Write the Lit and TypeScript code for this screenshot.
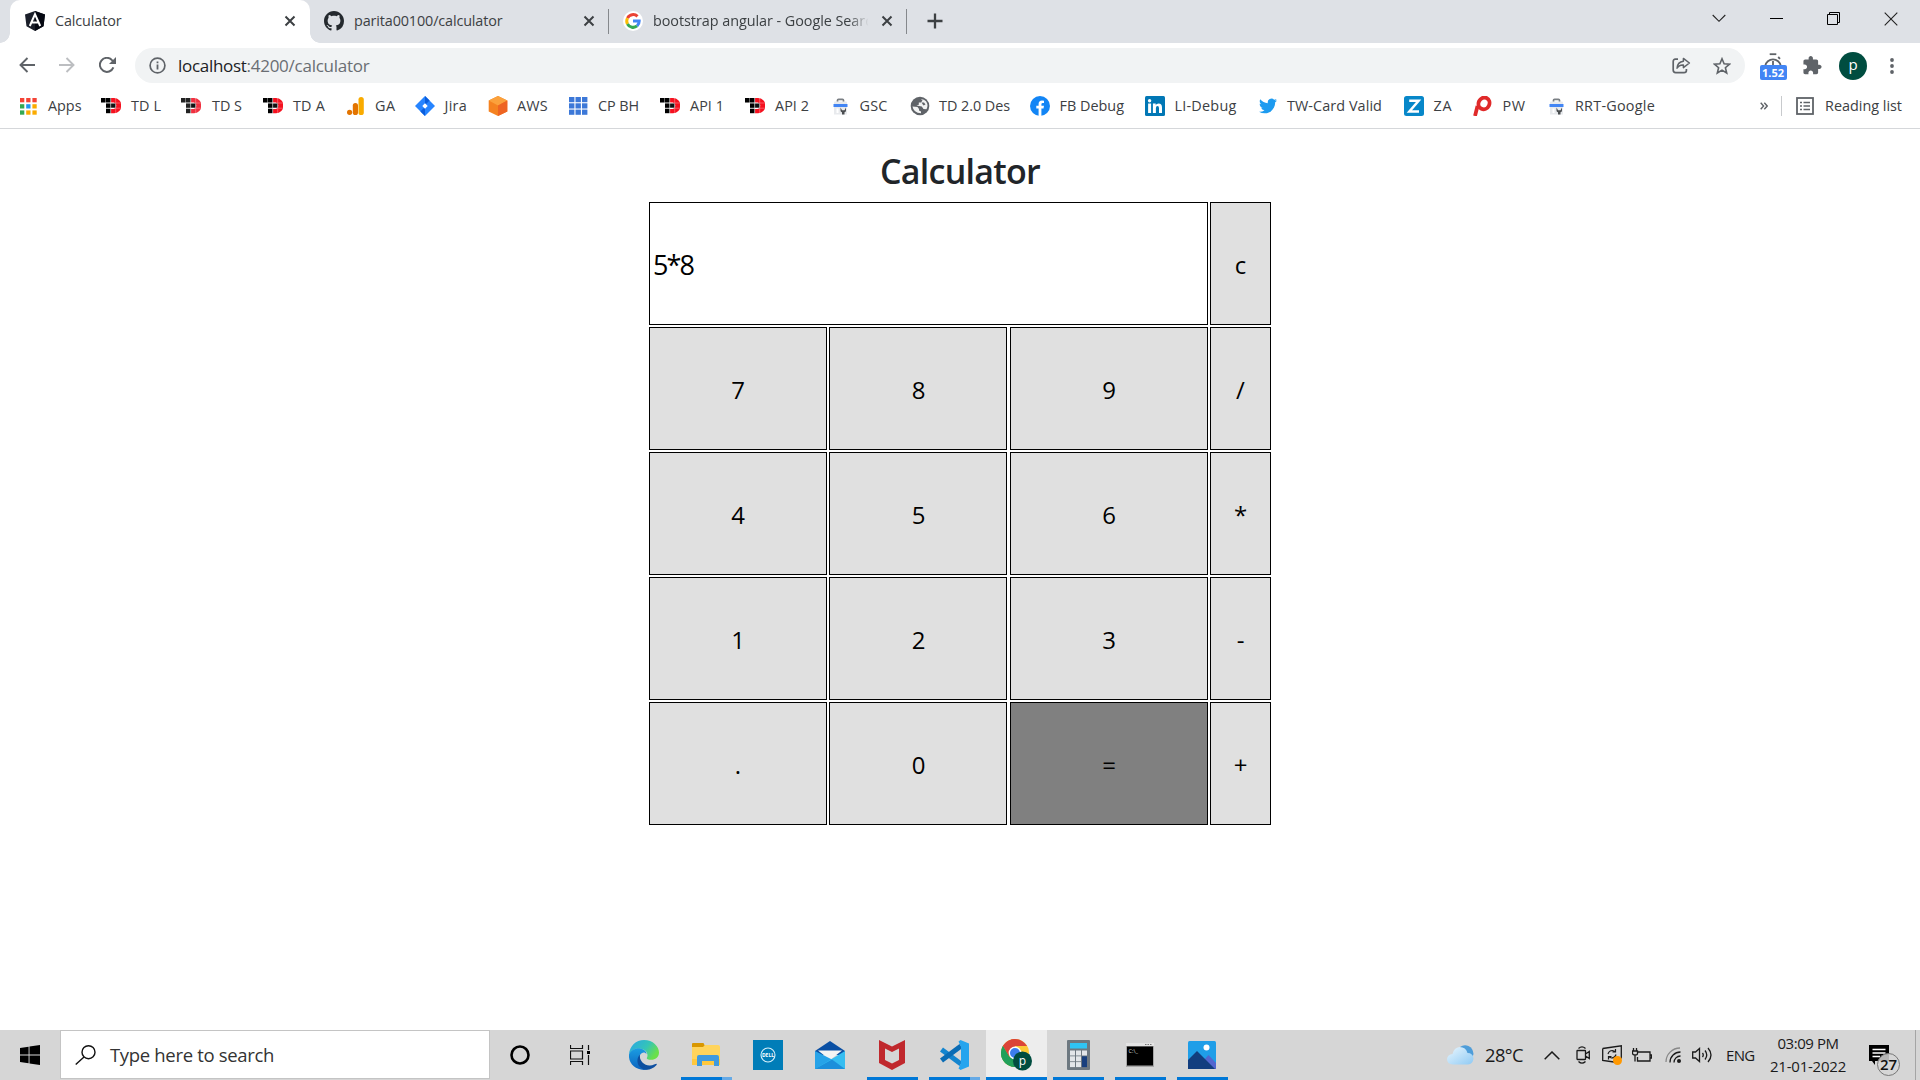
import { LitElement, html, svg, css, nothing } from "lit";
import { customElement, property } from "lit/decorators.js";
import { styleMap } from "lit/directives/style-map.js";

/* Text that spreads or tightens its tracking to occupy a given width. */
@customElement("fit-text")
class FitText extends LitElement {
  @property({ type: Number }) w = 0;
  @property() text = "";
  static styles = css`
    :host { display: block; white-space: pre; flex: none; }
    .run { display: inline-block; }
  `;
  updated() {
    const run = this.renderRoot.querySelector(".run") as HTMLElement;
    run.style.letterSpacing = "0px";
    const natural = run.getBoundingClientRect().width;
    if (this.w) run.style.letterSpacing = (this.w - natural) / this.text.length + "px";
  }
  render() {
    return html`<span class="run">${this.text}</span>`;
  }
}

const fit = (text: string, w: number) => html`<fit-text .text=${text} .w=${w}></fit-text>`;
const icon = (w: number, h: number, body: unknown, box = `0 0 ${w} ${h}`) =>
  html`<svg class="icon" width=${w} height=${h} viewBox=${box}>${body}</svg>`;

const closeX = icon(12, 12, svg`<path d="M1.5 1.5l9 9M10.5 1.5l-9 9" stroke="#3c4043" stroke-width="2" fill="none"/>`);

const angular = icon(20, 20, svg`<path d="M10 0L20 3.4L18.5 15.2L10 20L1.5 15.2L0 3.4z" fill="#1b1f2a"/><path d="M10 0L20 3.4L18.5 15.2L10 20z" fill="#050812"/><path d="M4.8 15L10 3.2L15.2 15M6.9 11.6H13.1" fill="none" stroke="#fff" stroke-width="2"/>`);
const github = icon(20, 20, svg`<path fill="#24292e" fill-rule="evenodd" d="M8 0C3.58 0 0 3.58 0 8c0 3.54 2.29 6.53 5.47 7.59.4.07.55-.17.55-.38 0-.19-.01-.82-.01-1.49-2.01.37-2.53-.49-2.69-.94-.09-.23-.48-.94-.82-1.13-.28-.15-.68-.52-.01-.53.63-.01 1.08.58 1.23.82.72 1.21 1.87.87 2.33.66.07-.52.28-.87.51-1.07-1.78-.2-3.64-.89-3.64-3.95 0-.87.31-1.59.82-2.15-.08-.2-.36-1.02.08-2.12 0 0 .67-.21 2.2.82.64-.18 1.32-.27 2-.27s1.36.09 2 .27c1.53-1.04 2.2-.82 2.2-.82.44 1.1.16 1.92.08 2.12.51.56.82 1.27.82 2.15 0 3.07-1.87 3.75-3.65 3.95.29.25.54.73.54 1.48 0 1.07-.01 1.93-.01 2.2 0 .21.15.46.55.38A8.01 8.01 0 0016 8c0-4.42-3.58-8-8-8z"/>`, "0 0 16 16");
const google = icon(20, 20, svg`<circle cx="10" cy="10" r="10" fill="#fff"/><g fill="none" stroke-width="3"><path d="M14.5 5.4A6.3 6.3 0 0 0 4.5 7.1" stroke="#ea4335"/><path d="M4.5 7.1A6.3 6.3 0 0 0 4.5 13" stroke="#fbbc05"/><path d="M4.5 13A6.3 6.3 0 0 0 14.1 14.9" stroke="#34a853"/><path d="M10 10.1H16.2A6.3 6.3 0 0 1 14.1 14.9" stroke="#4285f4"/></g>`);

const td = (dim = false) => icon(20, 16, svg`
  <g fill=${dim ? "#222" : "#000"}><rect x="0" y="0" width="4.6" height="4.6"/><rect x="5" y="0" width="4.6" height="4.6"/><rect x="5" y="5.3" width="4.6" height="4.6"/><rect x="5" y="10.6" width="4.6" height="4.6"/></g>
  <path d="M10 0H13A7.5 7.6 0 0 1 13 15.2H10V11H12.7A3.4 3.4 0 0 0 12.7 4.4H10z" fill=${dim ? "#f0303f" : "#f5111f"}/>
  <rect x="10" y="5.4" width="4.6" height="4.4" fill="#111"/>
  <path d="M9.8 0V15.2M14.7 0V15.2M0 5H20M4.8 10.2H20" stroke="#fff" stroke-width=".5" opacity=".6"/>`);
const apps = icon(17, 17, svg`${["#f44336", "#f44336", "#f44336", "#34a853", "#2196f3", "#fbab00", "#34a853", "#fbab00", "#fbab00"].map(
  (c, i) => svg`<rect x=${(i % 3) * 6.2} y=${Math.floor(i / 3) * 6.2} width="4.3" height="4.3" fill=${c}/>`)}`);
const ga = icon(17, 18, svg`<rect x="11.5" y="0" width="5.3" height="18" rx="2.6" fill="#f9ab00"/><rect x="5.8" y="6" width="5.2" height="12" rx="2.6" fill="#e37400"/><circle cx="2.6" cy="15.3" r="2.6" fill="#e37400"/>`);
const jira = icon(20, 20, svg`<path d="M10 0L20 10L10 20L0 10z" fill="#2684ff"/><path d="M10 0L14.6 4.6L10 9zM10 20L5.4 15.4L10 11z" fill="#0a5ddc"/><path d="M10 7.3L12.7 10L10 12.7L7.3 10z" fill="#fff"/>`);
const aws = icon(20, 20, svg`<path d="M10 0L19.3 4.5V15.5L10 20L.7 15.500V4.5z" fill="#f58220"/><path d="M10 0L19.3 4.5L10 9.5L.7 4.5z" fill="#fba13c"/><path d="M19.3 4.5L10 9.5V20L19.3 15.5z" fill="#ee6422"/>`);
const cpbh = icon(19, 18, svg`${[...Array(9).keys()].map((i) => svg`<rect x=${(i % 3) * 6.5} y=${Math.floor(i / 3) * 6.3} width="5.4" height="5.2" fill="#3c78d8"/>`)}`);
const gsc = icon(17, 20, svg`<path d="M5.500 6V4.300Q5.500 3.300 6.500 3.300H10.500Q11.500 3.300 11.500 4.300V6" stroke="#7a7f84" stroke-width="1.700" fill="none"/><path d="M2 6.500Q2 5.500 3 5.500H14Q15 5.500 15 6.500V18.500H2z" fill="#e8eaed"/><path d="M1.500 8H15.500V11H1.500z" fill="#4285f4"/><path d="M4.500 12.500H6.500V17H4.500z" fill="#fff"/><path d="M8.500 11.500V14.500Q8.500 16 10 16.200V18.500H12.500V16.200Q14 16 14 14.500V11.500L12.500 14.300H10z" fill="#4a4d50"/>`);
const globe = icon(20, 20, svg`<circle cx="10" cy="10" r="9.300" fill="#5f6368"/><path d="M2.500 10.500L7.500 11L9 13V14.500L11 15.500V17.300Q3.500 17 2.500 10.500zM11 3.200L12.500 4.500L11 6.500H8.800V8.800L6.500 9.500L11.800 10.500L13.500 13L16.500 13.200Q18.800 9 16 5.300Q14 3 11 3.200z" fill="#fff" opacity=".92"/><path d="M11.500 6.500H14L15.500 8.500L13.500 9.500z" fill="#5f6368"/>`);
const fb = icon(20, 20, svg`<circle cx="10" cy="10" r="10" fill="#1285f5"/><path d="M8.6 20V12.6H6.3V9.8H8.6V8Q8.6 4.5 12 4.5L14 4.7V7.1H12.7Q11.4 7.1 11.4 8.4V9.8H14L13.5 12.6H11.4V20z" fill="#fff"/>`);
const linkedin = icon(20, 20, svg`<rect width="20" height="20" rx="1.5" fill="#0177b5"/><circle cx="4.6" cy="4.7" r="1.7" fill="#fff"/><path d="M3.1 7.6H6.1V17H3.1zM7.9 7.6H10.7V9Q11.6 7.4 13.6 7.4Q17 7.4 17 11.6V17H14V12.3Q14 10 12.5 10Q10.9 10 10.9 12.3V17H7.9z" fill="#fff"/>`);
const twitter = icon(18, 18, svg`<path fill="#1d9bf0" d="M23.953 4.57a10 10 0 01-2.825.775 4.958 4.958 0 002.163-2.723c-.951.555-2.005.959-3.127 1.184a4.92 4.92 0 00-8.384 4.482C7.69 8.095 4.067 6.13 1.64 3.162a4.822 4.822 0 00-.666 2.475c0 1.71.87 3.213 2.188 4.096a4.904 4.904 0 01-2.228-.616v.06a4.923 4.923 0 003.946 4.827 4.996 4.996 0 01-2.212.085 4.936 4.936 0 004.604 3.417 9.867 9.867 0 01-6.102 2.105c-.39 0-.779-.023-1.17-.067a13.995 13.995 0 007.557 2.209c9.053 0 13.998-7.496 13.998-13.985 0-.21 0-.42-.015-.63A9.935 9.935 0 0024 4.59z"/>`, "0 0 24 24");
const za = icon(20, 20, svg`<rect width="20" height="20" rx="2.5" fill="#0787c9"/><path d="M5.2 4.8H14.6L5.4 15.4H15" fill="none" stroke="#fff" stroke-width="2.5"/>`);
const pw = icon(19, 20, svg`<path d="M2 20L4.500 10" stroke="#e02a2a" stroke-width="3.800" fill="none"/><ellipse cx="11" cy="7.400" rx="5.400" ry="6" transform="rotate(25 11 7.400)" fill="none" stroke="#e02a2a" stroke-width="3.800"/>`);

type Mark = { label: string; w: number; slot: number; icon: unknown; iw: number };
const marks: Mark[] = [
  { label: "Apps", w: 33.5, slot: 81, icon: apps, iw: 28 },
  { label: "TD L", w: 30, slot: 80, icon: td(), iw: 30 },
  { label: "TD S", w: 30, slot: 82, icon: td(true), iw: 31 },
  { label: "TD A", w: 32, slot: 84, icon: td(), iw: 30 },
  { label: "GA", w: 20.5, slot: 68, icon: ga, iw: 28 },
  { label: "Jira", w: 22.5, slot: 73, icon: jira, iw: 29.5 },
  { label: "AWS", w: 31, slot: 81, icon: aws, iw: 29 },
  { label: "CP BH", w: 41, slot: 91, icon: cpbh, iw: 29 },
  { label: "API 1", w: 34, slot: 85, icon: td(), iw: 30 },
  { label: "API 2", w: 34, slot: 87, icon: td(), iw: 30 },
  { label: "GSC", w: 28, slot: 77.5, icon: gsc, iw: 27.5 },
  { label: "TD 2.0 Des", w: 71, slot: 120, icon: globe, iw: 29.5 },
  { label: "FB Debug", w: 64.5, slot: 115, icon: fb, iw: 30 },
  { label: "LI-Debug", w: 62, slot: 114, icon: linkedin, iw: 30 },
  { label: "TW-Card Valid", w: 95, slot: 145, icon: twitter, iw: 28.5 },
  { label: "ZA", w: 19, slot: 69.5, icon: za, iw: 30 },
  { label: "PW", w: 23, slot: 74.5, icon: pw, iw: 29.5 },
  { label: "RRT-Google", w: 80, slot: 110, icon: gsc, iw: 27.5 },
];

@customElement("browser-chrome")
class BrowserChrome extends LitElement {
  static styles = css`
    :host { display: block; font: 14.4px/20px "Open Sans", "Noto Sans", sans-serif; color: #3c4043; background: #fff; }
    .icon { display: block; flex: none; }
    .strip { display: flex; height: 43px; background: #dee1e6; align-items: flex-start; }
    .tab { display: flex; align-items: center; box-sizing: border-box; height: 43px; flex: none; padding-bottom: 2px; }
    .tab.active { margin: 0 0 0 10px; width: 300px; padding-left: 15px; padding-right: 14px; background: #fff; border-radius: 10px 10px 0 0; position: relative; }
    .tab.active::before, .tab.active::after { content: ""; position: absolute; bottom: 0; width: 10px; height: 10px; }
    .tab.active::before { left: -10px; background: radial-gradient(circle at 0 0, transparent 9.5px, #fff 10px); }
    .tab.active::after { right: -10px; background: radial-gradient(circle at 100% 0, transparent 9.5px, #fff 10px); }
    .tab .name { flex: 1; margin-left: 10px; }
    .tab.github { width: 298px; padding-left: 14px; padding-right: 13px; }
    .tab.search { width: 297px; padding-left: 14px; padding-right: 13px; }
    .tab.search .name { margin-right: 8px; mask-image: linear-gradient(90deg, #000 89%, transparent 98%); }
    .rule { width: 1px; height: 25px; margin-top: 9px; background: #85888c; flex: none; }
    .plus { margin: 13px 0 0 20px; }
    .controls { margin-left: auto; display: flex; padding-right: 1px; }
    .controls .cell { width: 57px; height: 37px; display: grid; place-items: center; }
    .controls .cell:first-child { width: 59px; }
    .bar { display: flex; align-items: center; height: 45px; box-sizing: border-box; padding: 0 26px 0 19px; }
    .nav { display: flex; gap: 24px; width: 116px; flex: none; margin-top: -1px; }
    .omni { display: flex; align-items: center; flex: 1; height: 35px; border-radius: 18px; background: #f1f3f4; padding: 0 14px; box-sizing: border-box; font-size: 17px; color: #6a6e73; }
    .omni .info { margin-right: 12px; }
    .omni .host { color: #202124; }
    .omni .acts { margin-left: auto; display: flex; gap: 22px; align-items: center; }
    .ext { display: flex; align-items: center; margin-left: 14px; }
    .timer { width: 28px; height: 27px; display: flex; flex-direction: column; align-items: center; margin-right: 16px; padding-top: 1px; }
    .badge { width: 27px; height: 15px; border-radius: 2px; background: #4285f4; color: #fff; font-weight: 700; font-size: 11px; line-height: 16px; display: flex; justify-content: center; margin-top: -1px; z-index: 1; flex: none; }
    .who { width: 28px; height: 28px; border-radius: 50%; background: #004d40; color: #fff; font-size: 15px; line-height: 24px; text-align: center; margin: 0 23px 0 17px; }
    .marks { display: flex; align-items: center; height: 41px; box-sizing: border-box; border-bottom: 1px solid #d5d7da; padding: 0 18px 4px 20px; }
    .mark { display: flex; align-items: center; flex: none; }
    .ico { flex: none; }
    .more { margin-left: auto; display: flex; align-items: center; }
    .sep { width: 1px; height: 20px; background: #c8cacd; margin: 0 14px 0 13px; }
    .reading { margin-left: 11px; }
  `;
  render() {
    const g = "#5f6368";
    return html`
      <div class="strip">
        <div class="tab active">${angular}<div class="name">${fit("Calculator", 66.5)}</div>${closeX}</div>
        <div class="tab github">${github}<div class="name">${fit("parita00100/calculator", 148.5)}</div>${closeX}</div>
        <div class="rule"></div>
        <div class="tab search">${google}<div class="name">${fit("bootstrap angular - Google Searc", 219)}</div>${closeX}</div>
        <div class="rule"></div>
        <div class="plus">${icon(16, 16, svg`<path d="M8 .5V15.5M.5 8H15.5" stroke="#3c4043" stroke-width="2.3"/>`)}</div>
        <div class="controls">
          <div class="cell">${icon(14, 9, svg`<path d="M.7 1L7 7.3L13.3 1" fill="none" stroke="#222" stroke-width="1.1"/>`)}</div>
          <div class="cell">${icon(13, 3, svg`<path d="M0 1.5H13" stroke="#000" stroke-width="1"/>`)}</div>
          <div class="cell">${icon(13, 13, svg`<path d="M.5 2.5H10.5V12.5H.5zM2.5 2.5V.5H12.5V10.5H10.5" fill="none" stroke="#000"/>`)}</div>
          <div class="cell">${icon(14, 14, svg`<path d="M.7 .7L13.3 13.3M13.3 .7L.7 13.3" stroke="#222" stroke-width="1.1"/>`)}</div>
        </div>
      </div>
      <div class="bar">
        <div class="nav">
          ${icon(16, 16, svg`<path d="M16 8H1.5M8.5 1L1.5 8L8.5 15" fill="none" stroke=${g} stroke-width="1.9"/>`)}
          ${icon(16, 16, svg`<path d="M0 8H14.5M7.5 1L14.5 8L7.5 15" fill="none" stroke="#bcbec1" stroke-width="1.9"/>`)}
          ${icon(18, 16, svg`<path d="M14.4 10.4A7 7 0 1 1 13 3.1L15.4 5.4" fill="none" stroke=${g} stroke-width="2"/><path d="M17 0V7H10z" fill=${g}/>`)}
        </div>
        <div class="omni">
          <div class="info">${icon(17, 17, svg`<circle cx="8.5" cy="8.5" r="7.4" fill="none" stroke=${g} stroke-width="1.7"/><path d="M8.5 7.6V12.6M8.5 4.4V6.2" stroke=${g} stroke-width="1.8"/>`)}</div>
          <span class="host">${fit("localhost", 68.5)}</span>${fit(":4200/calculator", 123)}
          <div class="acts">
            ${icon(19, 17, svg`<path d="M6 2.2H3.4Q1.2 2.2 1.2 4.4V13Q1.2 15.6 3.6 15.6H12Q14.4 15.6 14.4 13.4V12" fill="none" stroke=${g} stroke-width="1.7"/><path d="M11.4 1.4L17.4 6L11.4 10.6V7.9Q7 7.6 5 11.2Q5.4 5 11.4 4.2z" fill="none" stroke=${g} stroke-width="1.5" stroke-linejoin="round"/>`)}
            ${icon(18, 18, svg`<path d="M9 1.8L11.1 6.8L16.5 7.2L12.4 10.7L13.7 16L9 13.1L4.3 16L5.6 10.7L1.5 7.2L6.9 6.8z" fill="none" stroke=${g} stroke-width="1.6"/>`)}
          </div>
        </div>
        <div class="ext">
          <div class="timer">
            ${icon(18, 13, svg`<path d="M5.7 1.2H12.3" stroke=${g} stroke-width="1.8"/><path d="M1.2 13A7.9 7.9 0 0 1 16.8 13M14.2 4L16 5.8M9 8V12.5" fill="none" stroke=${g} stroke-width="1.8"/>`)}
            <div class="badge">${fit("1.52", 22)}</div>
          </div>
          ${icon(19, 19, svg`<path fill=${g} d="M20.5 11H19V7c0-1.1-.9-2-2-2h-4V3.500C13 2.120 11.880 1 10.500 1S8 2.120 8 3.500V5H4c-1.100 0-1.990.900-1.990 2v3.800H3.500c1.490 0 2.700 1.210 2.700 2.700s-1.210 2.700-2.700 2.700H2V20c0 1.100.900 2 2 2h3.800v-1.500c0-1.490 1.210-2.700 2.700-2.700 1.490 0 2.700 1.210 2.700 2.700V22H17c1.100 0 2-.900 2-2v-4h1.500c1.380 0 2.500-1.120 2.500-2.500S21.880 11 20.500 11z"/>`, "1.5 1 22 22")}
          <div class="who">p</div>
          ${icon(4, 16, svg`<g fill=${g}><circle cx="2" cy="2" r="1.9"/><circle cx="2" cy="8" r="1.9"/><circle cx="2" cy="14" r="1.9"/></g>`)}
        </div>
      </div>
      <div class="marks">
        ${marks.map((m) => html`<div class="mark" style=${styleMap({ width: m.slot + "px" })}>
          <div class="ico" style=${styleMap({ width: m.iw + "px" })}>${m.icon}</div>${fit(m.label, m.w)}
        </div>`)}
        <div class="more">
          ${icon(8, 8, svg`<path d="M.7 .7L3.6 4L.7 7.3M4.3 .7L7.2 4L4.3 7.300" fill="none" stroke=${g} stroke-width="1.400"/>`)}
          <div class="sep"></div>
          ${icon(18, 18, svg`<rect x="1" y="1" width="16" height="16" fill="none" stroke=${g} stroke-width="1.800"/><path d="M4 5.500H6M4 9H6M4 12.500H6M7.500 5.500H14M7.500 9H14M7.500 12.500H14" stroke=${g} stroke-width="1.600"/>`)}
          <div class="reading">${fit("Reading list", 77)}</div>
        </div>
      </div>
    `;
  }
}

@customElement("calc-pad")
class CalcPad extends LitElement {
  static styles = css`
    :host { display: flex; flex-direction: column; align-items: center; font-family: "Open Sans", "Noto Sans", sans-serif; color: #000; padding-top: 17px; }
    .title { margin: 0 0 9px; height: 47px; font-size: 34px; line-height: 50px; font-weight: 600; color: #212529; }
    .grid { display: grid; grid-template-columns: 178px 179px 198px 61px; grid-auto-rows: 123px; gap: 2px; }
    .screen, .key { border: 1px solid #000; box-sizing: border-box; display: flex; align-items: center; font-size: 24px; line-height: 30px; padding-top: 2px; }
    .screen { grid-column: span 3; padding-left: 3px; font-size: 27px; background: #fff; }
    .key { background: #e0e0e0; justify-content: center; }
    .key.second { margin-right: 1px; padding-left: 1px; }
    .key.equals { background: #808080; }
  `;
  render() {
    const keys = ["c", "7", "8", "9", "/", "4", "5", "6", "*", "1", "2", "3", "-", ".", "0", "=", "+"];
    return html`
      <h1 class="title">${fit("Calculator", 160)}</h1>
      <div class="grid">
        <div class="screen">${fit("5*8", 40)}</div>
        ${keys.map((k) => html`<div class="key ${"8520".includes(k) ? "second" : ""} ${k === "=" ? "equals" : ""}">${k}</div>`)}
      </div>
    `;
  }
}

const edge = icon(30, 30, svg`<defs><linearGradient id="ea" x1="0" y1="0" x2="1" y2=".5"><stop offset="0" stop-color="#2aa5e8"/><stop offset=".6" stop-color="#34c4b8"/><stop offset="1" stop-color="#6be04a"/></linearGradient><linearGradient id="eb" x1="0" y1="0" x2="0" y2="1"><stop offset="0" stop-color="#1b9de2"/><stop offset="1" stop-color="#0b63bf"/></linearGradient></defs>
  <path d="M0 14.500C.5 6 7 0 15 0C24 0 30 6.500 30 12.500C30 17.500 26 19.800 22.500 19.800C19 19.800 17.500 18.800 17.800 17.900C19 16.500 19 12.500 15.500 10C11 7 3 8 0 14.500z" fill="url(#ea)"/>
  <path d="M0 14.500C2 9.500 8 7.300 12.500 8.800C16 10 17.500 12 17.500 14C16 11.500 12.500 12 11 15C8 21 13 28.500 19 29.300C9 32 -1 25 0 14.500z" fill="url(#eb)"/>
  <path d="M11.200 14.500C9.500 20 15 26 21 25.500C24 25.300 26.500 24 27.500 23.800C28 24 27.800 24.700 27.300 25.200C22 31 14 31 10 26C7.500 22.500 8 17 11.200 14.500z" fill="#0d4fa0"/>`);
const explorer = icon(28, 24, svg`<path d="M0 1Q0 0 1 0H11.500L13.500 4H0z" fill="#d99700"/><path d="M0 4H11L13 2H26Q28 2 28 4V22H0z" fill="#ffd45c"/><path d="M0 16H28V22H0z" fill="#ffc83d"/><path d="M5 14Q5 12 7 12H25Q27 12 27 14V23H22V18H10V23H5z" fill="#3f9ade"/>`);
const dell = icon(30, 30, svg`<rect width="30" height="30" fill="#007db8"/><circle cx="15" cy="15" r="7" fill="none" stroke="#d8f0fb" stroke-width="1.100"/><text x="15" y="17" font-size="5" font-weight="700" fill="#fff" text-anchor="middle">DELL</text>`);
const mail = icon(30, 28, svg`<path d="M15 0L30 10V14H0V10z" fill="#0a4fa3"/><path d="M3 9.500H27L15 19z" fill="#f4f4f4"/><path d="M0 10L20 20L9 28H0z" fill="#27a3e8"/><path d="M30 10L0 28H30z" fill="#35bdf1"/><path d="M0 28L17 18.500L30 28z" fill="#1c8fdb"/>`);
const mcafee = icon(26, 30, svg`<path d="M0 0L13 6.500L26 0V23L13 30L0 23z" fill="#c0282d"/><path d="M6 8.500L13 12L20 8.500V20L13 23.500L6 20z" fill="#d6d6d6"/>`);
const vscode = icon(30, 30, svg`<path d="M2.500 9.500L22 24" stroke="#1485cf" stroke-width="5"/><path d="M2.500 20.500L22 6" stroke="#0a6cb5" stroke-width="5"/><path d="M21.500 0L30 3.500V26.500L21.500 30L19.500 28.500L22 23V7L19.500 1.500z" fill="#25a4ee"/>`);
const chrome = icon(31, 32, svg`<circle cx="14" cy="14" r="14" fill="#fcc934"/><path d="M14 14L1.900 7A14 14 0 0 1 26.100 7H14z" fill="#db4437"/><path d="M1.900 7A14 14 0 0 0 14 28L20 17.500L8 17.500z" fill="#1e9b55"/><path d="M1.900 7Q7 0 14 0V14L8 17.500z" fill="#db4437"/><path d="M1.900 7L8 17.600L14 28A14 14 0 0 1 1.900 7z" fill="#21a05a"/><circle cx="14" cy="14" r="6.400" fill="#fff"/><circle cx="14" cy="14" r="5" fill="#3b7ded"/><circle cx="21.500" cy="22" r="9.500" fill="#004d40"/><text x="21.500" y="25.500" font-size="12" fill="#fff" text-anchor="middle">p</text>`);
const calc = icon(23, 30, svg`<rect width="23" height="30" rx="1" fill="#6d7880"/><rect x="3" y="3" width="17" height="5.500" fill="#2fc4f4"/><g fill="#e2e6e9"><rect x="3" y="10.500" width="5" height="5"/><rect x="9" y="10.500" width="5" height="5"/><rect x="15" y="10.500" width="5" height="5"/><rect x="3" y="16.300" width="5" height="5"/><rect x="9" y="16.300" width="5" height="5"/><rect x="3" y="22.100" width="5" height="5"/><rect x="9" y="22.100" width="5" height="5"/></g><rect x="15" y="16.300" width="5" height="10.800" fill="#173f7e"/>`);
const cmd = icon(28, 28, svg`<rect width="28" height="28" fill="#a8a8a8"/><rect x="1" y="3.500" width="26" height="23" fill="#000"/><path d="M0 0H28V3H0z" fill="#e4e4e4"/><path d="M19 1.500H26" stroke="#777" stroke-dasharray="1.500 1"/><text x="2.500" y="10" font-size="6" fill="#eee" textLength="15">C:\\_</text>`);
const photos = icon(28, 35, svg`<rect width="28" height="35" rx="1.500" fill="#1f9ee8"/><path d="M16 22L20.500 17L28 25V35H16z" fill="#5366cf"/><path d="M0 21L8.500 13L28 32V35H0z" fill="#123e7f"/><circle cx="18.500" cy="8.500" r="3" fill="#fff"/>`, "0 0 28 35");

type Task = { icon: unknown; line?: string; active?: boolean };
const tasks: Task[] = [
  { icon: edge },
  { icon: explorer, line: "split" },
  { icon: dell },
  { icon: mail },
  { icon: mcafee, line: "full" },
  { icon: vscode, line: "split" },
  { icon: chrome, line: "wide", active: true },
  { icon: calc, line: "full" },
  { icon: icon(28, 24, cmdBody()), line: "full" },
  { icon: icon(28, 28, photosBody()), line: "full" },
];

function cmdBody() {
  return svg`<rect width="28" height="24" fill="#a8a8a8"/><rect x="1" y="3.500" width="26" height="19" fill="#000"/><path d="M0 0H28V3H0z" fill="#e4e4e4"/><path d="M19 1.500H26" stroke="#777" stroke-dasharray="1.500 1"/><text x="2.500" y="9.500" font-size="5.500" fill="#ddd">C:\\_</text>`;
}
function photosBody() {
  return svg`<rect width="28" height="28" rx="1.500" fill="#1f9ee8"/><path d="M16 19L20.500 14L28 22V28H16z" fill="#5366cf"/><path d="M0 19L9 10L27 28H0z" fill="#123e7f"/><circle cx="18.500" cy="6.500" r="3" fill="#fff"/>`;
}

@customElement("task-bar")
class TaskBar extends LitElement {
  static styles = css`
    :host { display: flex; height: 50px; background: #d6d6d6; color: #1a1a1a; font: 15px/20px "Open Sans", "Noto Sans", sans-serif; }
    .icon { display: block; flex: none; }
    .start { width: 60px; display: grid; place-items: center; flex: none; }
    .search { width: 430px; box-sizing: border-box; height: 49px; background: #fff; border: 1px solid #c4c4c4; display: flex; align-items: center; padding: 1px 0 0 14px; gap: 14px; font-size: 18.5px; color: #333; }
    .cell { width: 60px; display: grid; place-items: center; flex: none; }
    .tasks { display: flex; margin-left: 3px; }
    .task { width: 62px; display: grid; grid-template-rows: 47px 3px; justify-items: center; align-items: center; }
    .task .icon { margin-top: 3px; }
    .task.active { background: #ededed; width: 61px; margin-left: 1px; }
    .line { height: 3px; width: 51px; background: #0078d7; }
    .line.split { background: linear-gradient(90deg, #0078d7 41px, #66aae6 41px); }
    .line.wide { width: 61px; }
    .tray { display: flex; align-items: center; margin-left: auto; }
    .slot { flex: none; display: flex; }
    .temp { font-size: 18.3px; }
    .lang { font-size: 15px; }
    .clock { width: 76px; display: flex; flex-direction: column; align-items: center; gap: 3px; margin-bottom: 1px; }
    .note { margin-left: 23px; width: 46px; height: 50px; }
    .note .icon { margin-top: 14px; }
    .show { width: 4px; align-self: stretch; border-left: 1px solid #a5a5a5; }
  `;
  render() {
    const k = "#1a1a1a";
    const tray: [number, string, unknown][] = [
      [38, "", icon(27, 20, svg`<defs><linearGradient id="cl" x1="0" y1="0" x2="1" y2="1"><stop offset="0" stop-color="#e9f6fe"/><stop offset="1" stop-color="#8fcaf4"/></linearGradient></defs><path d="M13 2Q17-1 21.500 1Q26 3 26.500 9L25 14H14z" fill="#4e9dd9"/><path d="M6 19.500Q0 19 0 14Q.5 9.500 5.500 9Q7 2.500 12.500 2Q19 2 20.500 8Q26 8 26.500 13.500Q26 19 21 19.500z" fill="url(#cl)"/>`)],
      [59, "temp", fit("28°C", 38)],
      [32, "", icon(16, 9, svg`<path d="M.7 8.300L8 1L15.300 8.300" fill="none" stroke=${k} stroke-width="1.500"/>`)],
      [26, "", icon(14, 18, svg`<path d="M2.500 2.500Q6-.8 9.500 2.500M2.500 15.500Q6 18.800 9.500 15.500M1 5Q1 4.500 1.500 4.500H9Q9.500 4.500 9.500 5V13Q9.500 13.500 9 13.500H1.500Q1 13.500 1 13zM9.500 8L13.300 5.500V12.500L9.500 10" fill="none" stroke=${k} stroke-width="1.300"/>`)],
      [30, "", icon(20, 20, svg`<path d="M.7 3.500L19.300 .8V13.500M12 17L.7 15.500V3.500" fill="none" stroke=${k} stroke-width="1.300"/><path d="M6 9Q7 5.500 10.500 5.500L13 6.500M13.500 4V7H10.500M14 9.500Q13 13 9.500 13L7 12M6.500 14.500V11.500H9.500" fill="none" stroke=${k} stroke-width="1.200"/><circle cx="15.500" cy="15.500" r="4.500" fill="#ff9800"/>`)],
      [33, "", icon(20, 15, svg`<path d="M6 4H18V13H5.500V9M18 7H19.500V10H18M1.500 0V3M4.500 0V3M.5 3H5.500V5.500Q5.500 7 3 7Q.5 7 .5 5zM3 7V13.500" fill="none" stroke=${k} stroke-width="1.300"/>`)],
      [27, "", icon(17, 16, svg`<g fill="none" stroke-width="1.300"><path d="M1 15A14 14 0 0 1 15 1" stroke="#888"/><path d="M5 15.500A10.500 10.500 0 0 1 15.500 5" stroke=${k}/><path d="M9 15.500A6.500 6.500 0 0 1 15.500 9" stroke=${k}/></g><circle cx="14" cy="14" r="2" fill=${k}/>`)],
      [34, "", icon(21, 16, svg`<path d="M.7 5H3.500L7.500 1.500V14.500L3.500 11H.7zM10.500 6Q12 8 10.500 10M13 3.500Q16.500 8 13 12.500M16 1Q22 8 16 15" fill="none" stroke=${k} stroke-width="1.300"/>`)],
      [44, "lang", fit("ENG", 28.5)],
    ];
    return html`
      <div class="start">${icon(20, 20, svg`<path d="M0 3L8.600 1.700V9.500H0zM9.500 1.500L20 0V9.500H9.500zM0 10.500H8.600V18.300L0 17zM9.500 10.500H20V20L9.500 18.500z" fill="#000"/>`)}</div>
      <div class="search">${icon(21, 20, svg`<circle cx="13.500" cy="7.200" r="6.500" fill="none" stroke="#111" stroke-width="1.400"/><path d="M9 12L.7 19.500" stroke="#111" stroke-width="1.400"/>`)}${fit("Type here to search", 164)}</div>
      <div class="cell">${icon(20, 20, svg`<circle cx="10" cy="10" r="8.500" fill="none" stroke="#000" stroke-width="2.600"/>`)}</div>
      <div class="cell">${icon(21, 20, svg`<path d="M.5 0V3.500H12.500V0M.5 20V16.500H12.500V20M.5 6H12.500V14H.5zM18.500 0V5M18.500 10V20" fill="none" stroke="#111" stroke-width="1.200"/><rect x="17" y="6" width="3" height="3" fill="#000"/>`)}</div>
      <div class="tasks">
        ${tasks.map((t) => html`<div class="task ${t.active ? "active" : ""}">${t.icon}${t.line ? html`<div class="line ${t.line}"></div>` : nothing}</div>`)}
      </div>
      <div class="tray">
        ${tray.map(([w, c, body]) => html`<div class="slot ${c}" style=${styleMap({ width: w + "px" })}>${body}</div>`)}
        <div class="clock">${fit("03:09 PM", 61)}${fit("21-01-2022", 76)}</div>
        <div class="note">${icon(34, 32, svg`<path d="M0 1H20V17H6V21L3 17H0z" fill="#000"/><path d="M3.500 5.500H16.500M3.500 9H16.500M3.500 12.500H11" stroke="#fff" stroke-width="1.500"/><circle cx="19.500" cy="20.500" r="11" fill="#d6d6d6" fill-opacity=".85" stroke="#777"/><text x="19.500" y="26" font-size="15" font-weight="600" fill="#111" text-anchor="middle">27</text>`)}</div>
        <div class="show"></div>
      </div>
    `;
  }
}

@customElement("app-root")
class AppRoot extends LitElement {
  static styles = css`
    :host { display: flex; flex-direction: column; width: 1920px; height: 1080px; background: #fff; overflow: hidden; }
    .page { flex: 1; }
  `;
  render() {
    return html`<browser-chrome></browser-chrome><calc-pad class="page"></calc-pad><task-bar></task-bar>`;
  }
}
